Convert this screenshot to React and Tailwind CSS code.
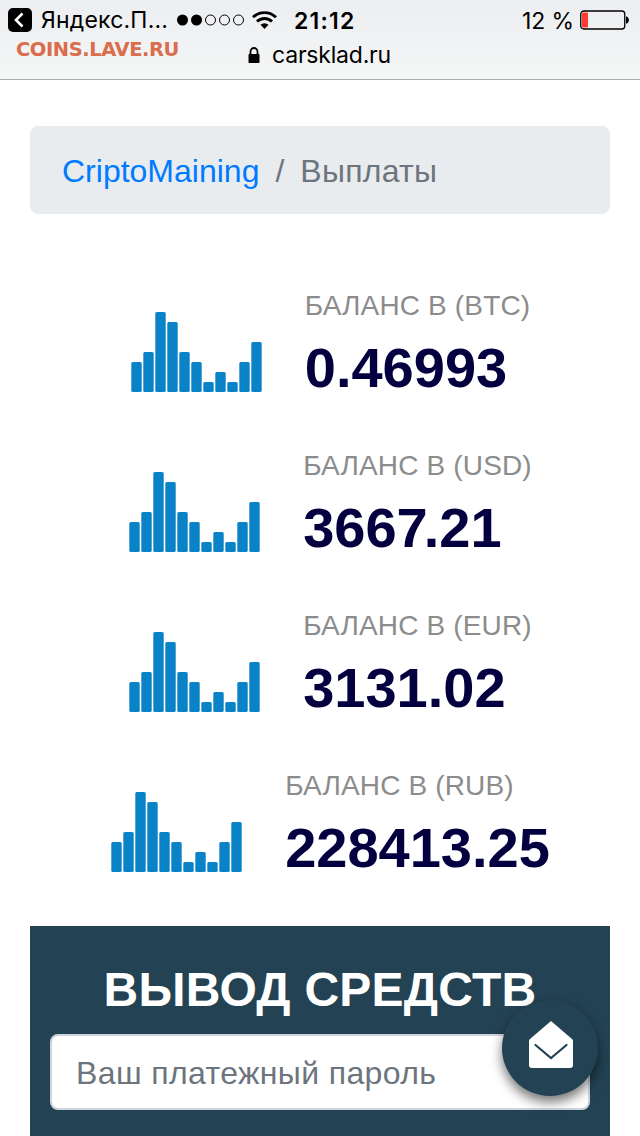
import React from "react";

const balances = [
    { label: "БАЛАНС В (BTC)", whole: "0", cents: ".46993" },
    { label: "БАЛАНС В (USD)", whole: "3667", cents: ".21", kern: "-ml-1" },
    { label: "БАЛАНС В (EUR)", whole: "3131", cents: ".02" },
    { label: "БАЛАНС В (RUB)", whole: "228413", cents: ".25" },
];

const bars = [30, 40, 80, 70, 40, 30, 10, 20, 10, 30, 50];

function BarChart() {
    return (
        <svg className="w-[172px] h-[120px] shrink-0" viewBox="0 0 172 120" fill="#0a82c8">
            {bars.map((h, i) => (
                <rect key={i} x={19.3 + i * 12} y={106 - h} width="10.4" height={h} rx="1.5" />
            ))}
        </svg>
    );
}

function BrowserBar() {
    return (
        <header className="h-20 border-b border-[#aeb0b2] bg-linear-to-b from-[#edeef1] to-[#f5f6f6] text-black font-['Inter',sans-serif]">
            <div className="flex h-10 items-center pl-2 pr-[11px]">
                <svg className="w-6 h-6" viewBox="0 0 24 24">
                    <rect width="24" height="24" rx="5" />
                    <path d="M14.5 5.5L8 12l6.5 6.5" fill="none" stroke="white" strokeWidth="2.6" />
                </svg>
                <span className="ml-[9px] w-[136px] pt-px text-[23px] tracking-[0.2px] whitespace-nowrap">Яндекс.П...</span>
                <svg className="w-[68px] h-3" viewBox="0 0 68 12">
                    <circle cx="5.5" cy="6" r="5.5" />
                    <circle cx="19.5" cy="6" r="5.5" />
                    <circle cx="33.5" cy="6" r="5" fill="none" stroke="black" />
                    <circle cx="47.5" cy="6" r="5" fill="none" stroke="black" />
                    <circle cx="61.5" cy="6" r="5" fill="none" stroke="black" />
                </svg>
                <svg className="ml-[7px] w-[25px] h-[18px]" viewBox="0 0 25 18" fill="none" stroke="black" strokeWidth="2.8">
                    <path d="M1 6.3a16.3 16.3 0 0 1 23 0" />
                    <path d="M5 10.6a10.6 10.6 0 0 1 15 0" />
                    <path d="M12.5 18l-4-4.2a5.8 5.8 0 0 1 8 0z" fill="black" stroke="none" />
                </svg>
                <span className="ml-[17px] pt-0.5 text-[23px] font-semibold tracking-[1.2px]">21:12</span>
                <span className="ml-auto pt-0.5 text-[23px] tracking-[-0.1px]">12 %</span>
                <svg className="ml-[6px] w-[49px] h-5" viewBox="0 0 49 20">
                    <rect x="0.75" y="1" width="44" height="18" rx="3" fill="none" stroke="black" strokeWidth="1.3" />
                    <rect x="2" y="2.5" width="6" height="15" rx="1" fill="#ff3b30" />
                    <path d="M46 6.5h1q2 1.5 2 3.5t-2 3.5h-1z" />
                </svg>
            </div>
            <div className="flex h-[30px] items-center pl-4">
                <span className="w-[232px] -mt-2.5 text-[19.5px] tracking-[-0.45px] font-bold text-[#d96d4c] font-['DejaVu_Sans',sans-serif] whitespace-nowrap">
                    COINS.LAVE.RU
                </span>
                <svg className="w-3 h-4" viewBox="0 0 12 16">
                    <rect x="0.5" y="7" width="11" height="9" rx="0.8" />
                    <path d="M2.5 8V4.5a3.5 3.5 0 0 1 7 0V8" fill="none" stroke="black" strokeWidth="1.8" />
                </svg>
                <span className="ml-3 text-[23px] tracking-[-0.2px]">carsklad.ru</span>
            </div>
        </header>
    );
}

export default function App() {
    return (
        <div className="relative w-[640px] h-[1136px] overflow-hidden bg-white font-['Liberation_Sans',Arial,sans-serif]">
            <BrowserBar />

            <main className="px-[30px]">
                <nav className="mt-[46px] flex h-[88px] items-center rounded-lg bg-[#e9ecef] px-8 pt-0.5 text-[32px]">
                    <a className="text-[#007bff]">CriptoMaining</a>
                    <span className="px-4 text-[#6c757d]">/</span>
                    <span className="tracking-[0.25px] text-[#6c757d]">Выплаты</span>
                </nav>

                <div className="mt-[72px]">
                    {balances.map(({ label, whole, cents, kern }) => (
                        <div key={label} className="flex h-40 justify-center pl-0.5">
                            <BarChart />
                            <div className="ml-[21px]">
                                <div className="pt-px text-[28px] leading-[38px] tracking-[0.15px] text-[#8c8c8c]">{label}</div>
                                <div className="mt-[11px] text-[56px] leading-[64px] font-bold text-[#04003f]">
                                    {whole}
                                    <span className={kern}>{cents}</span>
                                </div>
                            </div>
                        </div>
                    ))}
                </div>

                <section className="h-[210px] bg-[#234254] px-5 pt-9">
                    <h2 className="h-[72px] text-center text-[48px] leading-[56px] font-bold tracking-[0.25px] text-white whitespace-nowrap">
                        ВЫВОД СРЕДСТВ
                    </h2>
                    <input
                        type="text"
                        placeholder="Ваш платежный пароль"
                        className="block h-[76px] w-full rounded-lg border-2 border-[#ced4da] bg-white px-6 pt-0.5 text-[32px] tracking-[0.38px] placeholder:text-[#6c757d]"
                    />
                </section>
            </main>

            {/* floating contact button */}
            <button className="absolute left-[502px] top-[1000px] flex size-24 items-center justify-center rounded-full bg-[#234254] shadow-[0_6px_12px_rgba(0,0,0,0.55)]">
                <svg className="-mt-2 ml-0.5 w-11 h-[47px]" viewBox="0 0 44 47">
                    <path d="M22 0L43 18q1 1 1 2v24q0 3-3 3H3q-3 0-3-3V20q0-1 1-2z" fill="white" />
                    <path d="M6.5 24L22 37l15.5-13" fill="none" stroke="#234254" strokeWidth="2.2" strokeLinecap="round" />
                </svg>
            </button>
        </div>
    );
}
